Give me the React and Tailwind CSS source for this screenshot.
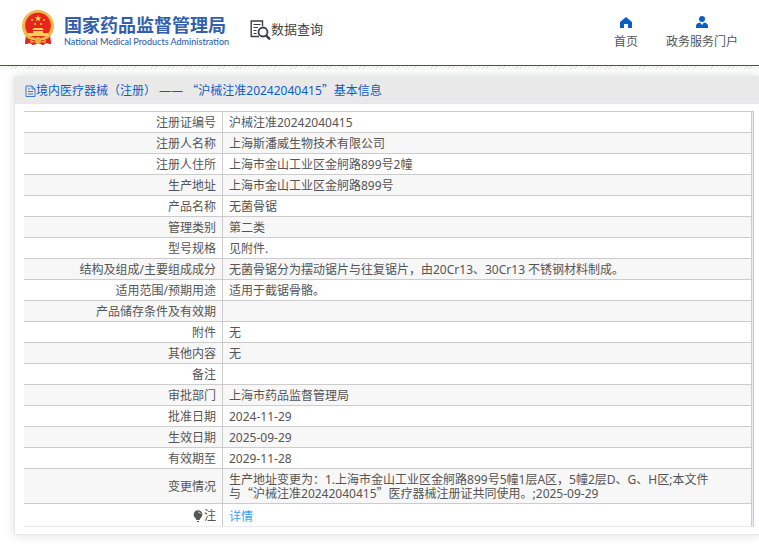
import React from "react";

function Q({ children }) {
  return <span className="font-['Noto_Sans_CJK_SC',sans-serif] leading-none">{children}</span>;
}

const rows = [
  ["注册证编号", "沪械注准20242040415"],
  ["注册人名称", "上海斯潘威生物技术有限公司"],
  ["注册人住所", "上海市金山工业区金舸路899号2幢"],
  ["生产地址", "上海市金山工业区金舸路899号"],
  ["产品名称", "无菌骨锯"],
  ["管理类别", "第二类"],
  ["型号规格", "见附件."],
  ["结构及组成/主要组成成分", "无菌骨锯分为摆动锯片与往复锯片，由20Cr13、30Cr13 不锈钢材料制成。"],
  ["适用范围/预期用途", "适用于截锯骨骼。"],
  ["产品储存条件及有效期", ""],
  ["附件", "无"],
  ["其他内容", "无"],
  ["备注", ""],
  ["审批部门", "上海市药品监督管理局"],
  ["批准日期", "2024-11-29"],
  ["生效日期", "2025-09-29"],
  ["有效期至", "2029-11-28"],
];

function Emblem() {
  return (
    <svg width="34" height="36" viewBox="0 0 34 36" aria-hidden="true">
      <path d="M5 24 4 34l5-1 3 2 5-2 5 2 3-2 5 1-1-10z" fill="#dc2a20" />
      <circle cx="17" cy="16" r="16" fill="#eab545" />
      <circle cx="17" cy="16" r="14.8" fill="none" stroke="#f3c95e" strokeDasharray="2 1" />
      <circle cx="17" cy="15.5" r="12.8" fill="#e8251d" />
      <path d="m17 5 .9 2.300 2.500.1-2 1.500.7 2.400-2.100-1.400-2.100 1.400.7-2.400-2-1.500 2.500-.1z" fill="#f8d354" />
      <g fill="#f8d354">
        <circle cx="11" cy="10" r="1" />
        <circle cx="14" cy="14" r="1" />
        <circle cx="20" cy="14" r="1" />
        <circle cx="23" cy="10" r="1" />
        <path d="M13 18h8l2 2H11zM12 21h10v2H12zM7 23h20v3H7z" />
      </g>
      <path d="M5 28q12 5 24 0l1 6-5-1-3 2-5-2-5 2-3-2-5 1z" fill="#dc2a20" />
      <path d="M9 30q8 3 16 0l-1 3-3-1-4 2-4-2-3 1z" fill="#f0b542" />
      <circle cx="17" cy="30" r="3" fill="#e8b13d" />
    </svg>
  );
}

function QueryIcon() {
  return (
    <svg width="21" height="21" viewBox="0 0 21 21" fill="none" stroke="#3c3c4c" aria-hidden="true">
      <path d="M9 16.500H1.200V1H12.500v5" strokeWidth="1.400" />
      <path d="M3.500 4.500h7M3.500 7.500h4.500M3.500 10.500h3M3.500 13.500h3" />
      <circle cx="13" cy="12" r="4.500" strokeWidth="1.800" />
      <path d="m16 15.300 4 4" strokeWidth="2.400" />
    </svg>
  );
}

export default function App() {
  return (
    <div className="overflow-x-hidden bg-white pb-[13px] font-['Noto_Sans','Noto_Sans_CJK_SC',sans-serif] text-[12px] leading-[14px] text-[#555]">
      <header className="flex h-[66px] items-start border-b border-[#0a5bb8] px-[21px]">
        <a href="#top" className="flex pt-[10px]">
          <Emblem />
          <span className="ml-[9px] block w-[161px] pt-[3px] text-[#315fad]">
            <span className="block whitespace-nowrap font-['Noto_Sans_CJK_SC',sans-serif] text-[18px] font-bold leading-[22px]">国家药品监督管理局</span>
            <span className="block whitespace-nowrap font-['Lato',sans-serif] text-[9px] font-medium leading-[14px]">National Medical Products Administration</span>
          </span>
        </a>
        <a href="#query" className="ml-[25px] flex pt-[20px] text-[#444]">
          <QueryIcon />
          <span className="whitespace-nowrap font-['Noto_Sans_CJK_SC',sans-serif] text-[13px] leading-[18px]">数据查询</span>
        </a>
        <nav className="ml-auto flex gap-[28px] pt-[16px]">
          <a href="#home" className="flex flex-col items-center">
            <svg width="12" height="12" viewBox="0 0 12 12" fill="#0b5fc4" aria-hidden="true">
              <path d="M6 1 0 6v6h4V8h4v4h4V6z" />
            </svg>
            <span className="mt-[5px] leading-[18px]">首页</span>
          </a>
          <a href="#portal" className="flex flex-col items-center">
            <svg width="12" height="12" viewBox="0 0 12 12" fill="#0b5fc4" aria-hidden="true">
              <circle cx="6" cy="3" r="3" />
              <path d="M0 12V10q0-3 4-3.500L6 9l2-2.500q4 .5 4 3.500v2z" />
            </svg>
            <span className="mt-[5px] leading-[18px]">政务服务门户</span>
          </a>
        </nav>
      </header>
      <div className="h-[3px] bg-[repeating-linear-gradient(135deg,#e4e4e4_0px,#e4e4e4_1px,#ffffff_1px,#ffffff_3px)]" />
      <main className="ml-[14px] mt-[7px] border-b border-l border-[#e8e8e8] bg-white pb-[7px] shadow-[0_0_10px_#ddd]">
        <h1 className="flex h-[28px] items-center border-b border-[#e6e6f0] bg-[#e9e9e9] pl-[10px] pt-[2px] text-[#0b5fc4]">
          <svg width="11" height="12" viewBox="0 0 11 12" fill="none" stroke="#0b5fc4" strokeWidth="0.8" aria-hidden="true">
            <path d="M1 1h6l3 3v7.500H1zM7 1v3h3M3 4h2M3 6.500h5M3 9h5" />
          </svg>
          <span className="whitespace-pre">境内医疗器械（注册） —— <Q>“</Q>沪械注准20242040415<Q>”</Q>基本信息</span>
        </h1>
        <div className="ml-[9px] mr-[5px] mt-[7px] border-r border-t border-[#ccc] bg-[#ebebf5] pr-px">
          <table className="w-full border-separate border-spacing-0 bg-white">
            <tbody>
              {rows.map(([label, value]) => (
                <tr key={label} className="even:bg-[#f7f7f7]">
                  <th scope="row" className="h-[21px] w-[199px] border-b border-r border-[#ccc] p-0 pr-[6px] pt-[2px] text-right font-normal">{label}</th>
                  <td className="border-b border-r border-[#ccc] p-0 pl-[6px] pt-[2px]">{value}</td>
                </tr>
              ))}
              <tr className="bg-[#f7f7f7]">
                <th scope="row" className="h-[35px] border-b border-r border-[#ccc] p-0 pr-[6px] pt-[2px] text-right font-normal">变更情况</th>
                <td className="border-b border-r border-[#ccc] p-0 pl-[6px] pr-[32px] pt-[2px]">
                  生产地址变更为：1.上海市金山工业区金舸路899号5幢1层A区，5幢2层D、G、H区;本文件与<Q>“</Q>沪械注准20242040415<Q>”</Q>医疗器械注册证共同使用。;2025-09-29
                </td>
              </tr>
              <tr>
                <th scope="row" className="h-[23px] border-b border-r border-b-[#ebebf5] border-r-[#ccc] p-0 pr-[6px] pt-[2px] text-right font-normal">
                  <span className="flex items-center justify-end">
                    <svg width="11" height="12" viewBox="0 0 11 12" aria-hidden="true">
                      <circle cx="5" cy="4.500" r="4.300" fill="#555" />
                      <path d="M2 7h6l-1.500 3h-3zM4 11h2v1H4z" fill="#555" />
                      <path d="M5 2q2 0 2.500 2" fill="none" stroke="#fff" strokeWidth="0.7" />
                    </svg>
                    注
                  </span>
                </th>
                <td className="border-b border-r border-b-[#ebebf5] border-r-[#ccc] p-0 pl-[6px] pt-[4px]">
                  <a href="#detail" className="text-[#409eff]">详情</a>
                </td>
              </tr>
            </tbody>
          </table>
        </div>
      </main>
    </div>
  );
}
